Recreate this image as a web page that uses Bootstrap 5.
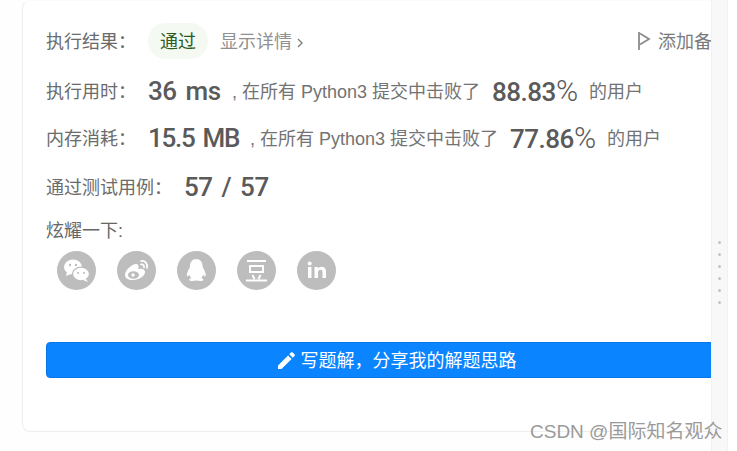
<!doctype html>
<html lang="zh"><head><meta charset="utf-8">
<link href="https://cdn.jsdelivr.net/npm/bootstrap@5.3.0/dist/css/bootstrap.min.css" rel="stylesheet">
<style>
html,body{height:451px;overflow:hidden;background:#fff}
body{font-family:"Liberation Sans","Noto Sans CJK SC",sans-serif;color:#666;font-size:18px;position:relative}
.shell{height:451px}
.pane{width:711px;padding-left:22px;overflow:hidden;flex:none;background:#fefefe}
.sheet{height:432px;background:#fff;border:1px solid #eeeeee;border-top-color:#fbfbfb;border-right:0;border-radius:8px 0 0 8px;padding:25px 0 0 23px;width:689px}
.gutter{width:17px;flex:none;background:#f8f8f9;border-left:1px solid #f1f1f1;border-right:1px solid #f1f1f1;padding-top:241px}
.gutter i{display:block;width:3px;height:3px;border-radius:50%;background:#c4c4c4;margin:0 auto 9px}
.line{height:30px;line-height:30px;white-space:nowrap}
.r2{margin-top:20px}.r3{margin-top:17px}.r4{margin-top:19px}.r5{margin-top:14px}
.lab{width:102px;flex:none;color:#6b6b6b;padding-top:2px}
.lab-w{width:138px}
.num{font-family:Roboto,"Liberation Sans",sans-serif;font-weight:500;font-size:26px;color:#5a5a5a;letter-spacing:-.5px;word-spacing:3px;flex:none}
.t36{width:84px}
.t155{width:102px;letter-spacing:-1.300px}
.rate{margin-left:12px;margin-right:11px}
.pct{font-weight:300;font-size:30px;letter-spacing:0}
.txt{color:#737373;flex:none;padding-top:2px}
.pill{background:#f4f9f1;color:#2c5c24;width:60px;height:36px;border-radius:18px;line-height:38px;text-align:center}
.more{color:#909090;margin-left:12px;padding-top:2px}
.more svg{margin-left:5px;vertical-align:0}
.note{color:#7a7a7a;gap:7px;margin-right:-1px;padding-top:2px}
.note svg{margin-top:-2px}
.socials{gap:21px;margin:5px 0 0 11px}
.ico{width:39px;height:39px;border-radius:50%;background:#bdbdbd;flex:none}
.ico svg{display:block}
.wbtn{height:36px;width:702px;margin-top:52px;background:#0a84ff;border:1px solid #0877e6;border-radius:4px;color:#fff;font-size:18px;line-height:32px;padding:2px 0 0}
.wbtn:hover{background:#0a84ff;color:#fff}
.wbtn svg{margin:-2px 6px 0 0}
.mark-w{position:absolute;left:530px;top:418px;font-size:19px;line-height:28px;color:#9a9a9a;white-space:nowrap}
</style></head><body>
<div class="shell d-flex">
<div class="pane"><div class="sheet">
 <div class="line d-flex align-items-center">
  <span class="lab">执行结果：</span><span class="pill">通过</span><span class="more">显示详情<svg width="6" height="10" viewBox="0 0 6 10"><path d="M1 1l4 4-4 4" fill="none" stroke="#808080" stroke-width="1.400"/></svg></span>
  <span class="note ms-auto d-flex align-items-center"><svg width="14" height="20" viewBox="0 0 14 20"><path d="M2 1v18M3 2.500l9 5.500-9 5.500" fill="none" stroke="#8c8c8c" stroke-width="1.800"/></svg>添加备</span>
 </div>
 <div class="line r2 d-flex align-items-center"><span class="lab">执行用时：</span><span class="num t36">36 ms</span><span class="txt">, 在所有 Python3 提交中击败了</span><span class="num rate">88.83<span class="pct">%</span></span><span class="txt">的用户</span></div>
 <div class="line r3 d-flex align-items-center"><span class="lab">内存消耗：</span><span class="num t155">15.5 MB</span><span class="txt">, 在所有 Python3 提交中击败了</span><span class="num rate">77.86<span class="pct">%</span></span><span class="txt">的用户</span></div>
 <div class="line r4 d-flex align-items-center"><span class="lab lab-w">通过测试用例：</span><span class="num">57 / 57</span></div>
 <div class="line r5">炫耀一下:</div>
 <div class="socials d-flex">
  <span class="ico"><svg width="39" height="39" viewBox="0 0 39 39" fill="#fff"><ellipse cx="16" cy="16" rx="9" ry="7.500"/><path d="M10 21l-1 4 5-2z"/><ellipse cx="24" cy="23" rx="8.500" ry="6.800" stroke="#bdbdbd" stroke-width="1.200"/><path d="M29 28l2 3-5-2z"/><circle cx="13" cy="14" r="1.200" fill="#bdbdbd"/><circle cx="19" cy="14" r="1.200" fill="#bdbdbd"/><circle cx="21" cy="22" r="1" fill="#bdbdbd"/><circle cx="27" cy="22" r="1" fill="#bdbdbd"/></svg></span>
  <span class="ico"><svg width="39" height="39" viewBox="0 0 39 39" fill="none"><path d="M8 24c0-5 7-11 11-11 3 0 3 3 2 5 4-1 7 0 7 3 0 4-6 8-12 8-5 0-8-2-8-5z" fill="#fff"/><ellipse cx="16.500" cy="24" rx="5.500" ry="3.800" fill="#bdbdbd"/><circle cx="16" cy="24" r="1.700" fill="#fff"/><path d="M24 10c4-1 7 3 6 7M24 13.500c2-.5 3.500 1 3 3" stroke="#fff" stroke-width="1.700" stroke-linecap="round"/></svg></span>
  <span class="ico"><svg width="39" height="39" viewBox="0 0 39 39" fill="#fff"><path d="M19.500 8c-4.500 0-6.500 3.500-6.500 7 0 1-.3 2-1 3-1.500 2.500-2.500 5-2 7 .4 1 1.500-.2 2.300-1.300.4 1.300 1 2.300 2 3.200-1.500.6-2.500 1.300-2 2.300.8 1 4 .8 7 .3 3 .5 6.200.7 7-.3.500-1-.5-1.700-2-2.300 1-.9 1.600-1.900 2-3.200.8 1.100 1.900 2.300 2.300 1.300.5-2-.5-4.500-2-7-.7-1-1-2-1-3 0-3.500-2-7-6.600-7z"/></svg></span>
  <span class="ico"><svg width="39" height="39" viewBox="0 0 39 39" fill="none" stroke="#fff" stroke-width="2"><path d="M10 10h19M13 15h13v6H13zM15.500 24l2 4M23.500 24l-2 4M9 29.500h21"/></svg></span>
  <span class="ico"><svg width="39" height="39" viewBox="0 0 39 39" fill="#fff"><rect x="11" y="16" width="3.500" height="11"/><circle cx="12.700" cy="12.500" r="2"/><path d="M17.500 16h3.300v1.600c.8-1.200 2-1.900 3.600-1.900 3 0 4.600 1.800 4.600 5V27h-3.500v-5.700c0-1.700-.7-2.600-2-2.600-1.500 0-2.500 1-2.500 2.800V27h-3.500z"/></svg></span>
 </div>
 <button type="button" class="btn wbtn d-flex align-items-center justify-content-center"><svg width="17" height="17" viewBox="0 0 16 16" fill="#fff"><path d="M0 12.700 9.500 3.200l3.300 3.300L3.300 16H0zM10.600 2.100l1.600-1.600c.5-.5 1.200-.5 1.700 0l1.600 1.600c.5.500.5 1.200 0 1.700l-1.600 1.600z"/></svg>写题解，分享我的解题思路</button>
</div></div>
<div class="gutter"><i></i><i></i><i></i><i></i><i></i><i></i></div>
</div>
<div class="mark-w">CSDN @国际知名观众</div>
<script src="https://cdn.jsdelivr.net/npm/bootstrap@5.3.0/dist/js/bootstrap.bundle.min.js"></script>
</body></html>
